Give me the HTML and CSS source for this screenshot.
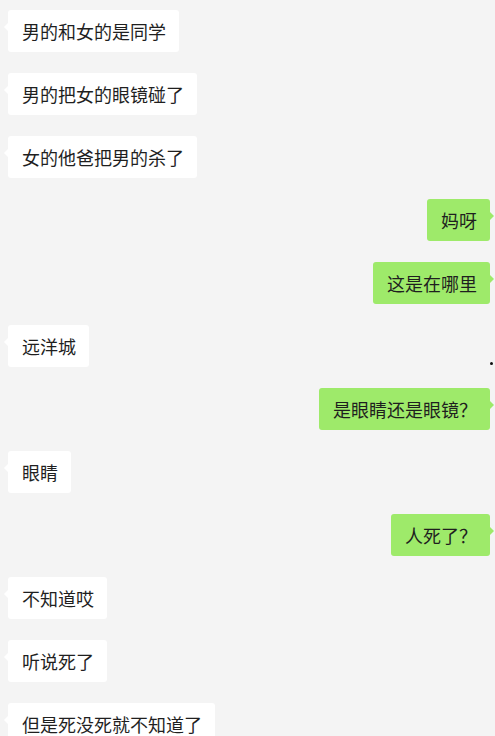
FILE: index.html
```html
<!DOCTYPE html>
<html lang="zh">
  <head>
    <meta charset="UTF-8" />
    <title>聊天记录</title>
    <link rel="stylesheet" href="styles.css">
  </head>
  <body>
    <div class="chat">
      <div class="row left"><div class="bubble">男的和女的是同学</div></div>
      <div class="row left"><div class="bubble">男的把女的眼镜碰了</div></div>
      <div class="row left"><div class="bubble">女的他爸把男的杀了</div></div>
      <div class="row right"><div class="bubble">妈呀</div></div>
      <div class="row right"><div class="bubble">这是在哪里</div></div>
      <div class="row left marked">
        <div class="bubble">远洋城</div>
        <span class="dot"></span>
      </div>
      <div class="row right"><div class="bubble">是眼睛还是眼镜？</div></div>
      <div class="row left"><div class="bubble">眼睛</div></div>
      <div class="row right"><div class="bubble">人死了？</div></div>
      <div class="row left"><div class="bubble">不知道哎</div></div>
      <div class="row left"><div class="bubble">听说死了</div></div>
      <div class="row left"><div class="bubble">但是死没死就不知道了</div></div>
    </div>
  </body>
</html>
```

FILE: styles.css
```css
* {
  box-sizing: border-box;
}

body {
  margin: 0;
  padding: 0;
  background-color: #f4f4f4;
  font-family: "Noto Sans CJK SC", "Noto Sans", sans-serif;
  overflow: hidden;
}

.chat {
  display: flex;
  flex-direction: column;
  gap: 21px;
  padding: 10px 5px 0 8px;
}

.row {
  display: flex;
}

.row.right {
  justify-content: flex-end;
}

.row.marked {
  position: relative;
}

.bubble {
  position: relative;
  height: 42px;
  line-height: 42px;
  padding: 0 13px 0 14px;
  font-size: 18px;
  color: #1f1f1f;
  border-radius: 3px;
  white-space: nowrap;
}

.left .bubble {
  background: #ffffff;
}

.right .bubble {
  background: #9eea6a;
}

.left .bubble::before {
  content: "";
  position: absolute;
  left: -4px;
  top: 13px;
  border-top: 4px solid transparent;
  border-bottom: 4px solid transparent;
  border-right: 4px solid #ffffff;
}

.right .bubble::after {
  content: "";
  position: absolute;
  right: -4px;
  top: 13px;
  border-top: 4px solid transparent;
  border-bottom: 4px solid transparent;
  border-left: 4px solid #9eea6a;
}

.dot {
  position: absolute;
  right: -3px;
  top: 37px;
  width: 3px;
  height: 3px;
  border-radius: 50%;
  background: #111;
}
```
